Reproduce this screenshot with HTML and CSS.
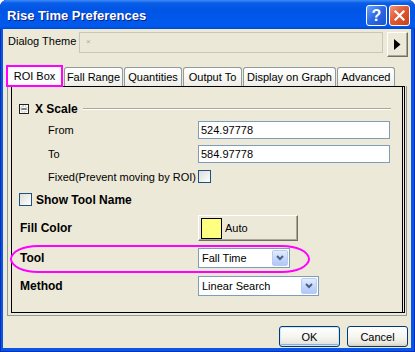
FILE: index.html
```html
<!DOCTYPE html>
<html>
<head>
<meta charset="utf-8">
<link rel="stylesheet" href="styles.css">
</head>
<body>
<div class="window">
  <div class="titlebar">
    <span class="title">Rise Time Preferences</span>
    <span class="tb-btn help">?</span>
    <span class="tb-btn close"><svg width="11" height="11" viewBox="0 0 11 11"><path d="M1.5 1.5 L9.5 9.5 M9.5 1.5 L1.5 9.5" stroke="#fff" stroke-width="2.2" stroke-linecap="square"/></svg></span>
  </div>
  <div class="client">
    <div class="theme-row">
      <span class="theme-label">Dialog Theme</span>
      <div class="theme-input"><span class="theme-x">×</span></div>
      <div class="arrow-btn"><svg width="7" height="11" viewBox="0 0 7 11"><path d="M0 0 L6.5 5.5 L0 11 Z" fill="#000"/></svg></div>
    </div>
    <div class="tabs">
      <div class="tab active t-roi">ROI Box</div>
      <div class="tab t-fall">Fall Range</div>
      <div class="tab t-quant">Quantities</div>
      <div class="tab t-out">Output To</div>
      <div class="tab t-disp">Display on Graph</div>
      <div class="tab t-adv">Advanced</div>
    </div>
    <div class="panel">
      <div class="page">
        <div class="group-head">
          <svg class="collapse" width="10" height="10" viewBox="0 0 10 10"><rect x="0.5" y="0.5" width="9" height="9" fill="#fff" stroke="#222"/><rect x="2" y="2" width="6" height="6" rx="2" fill="none" stroke="#777" stroke-width="0.8" stroke-dasharray="1 1"/><path d="M2.5 5 H7.5" stroke="#000" stroke-width="1"/></svg>
          <span class="gh-title">X Scale</span>
          <span class="gh-line"></span>
        </div>
        <div class="row r-from"><span class="lbl">From</span><div class="textbox">524.97778</div></div>
        <div class="row r-to"><span class="lbl">To</span><div class="textbox">584.97778</div></div>
        <div class="row r-fixed"><span class="lbl">Fixed(Prevent moving by ROI)</span><div class="cb"></div></div>
        <div class="check-row"><div class="cb"></div><span class="bold">Show Tool Name</span></div>
        <div class="row r-fill"><span class="lbl bold top">Fill Color</span><div class="color-btn"><span class="swatch"></span><span class="auto">Auto</span></div></div>
        <div class="row r-tool"><span class="lbl bold top">Tool</span><div class="combo c-tool"><span class="combo-text">Fall Time</span><span class="dd"><svg width="8" height="6" viewBox="0 0 8 6"><path d="M1 1 L4 4 L7 1" fill="none" stroke="#4D6185" stroke-width="2"/></svg></span></div></div>
        <div class="row r-method"><span class="lbl bold top">Method</span><div class="combo c-method"><span class="combo-text">Linear Search</span><span class="dd"><svg width="8" height="6" viewBox="0 0 8 6"><path d="M1 1 L4 4 L7 1" fill="none" stroke="#4D6185" stroke-width="2"/></svg></span></div></div>
      </div>
    </div>
    <div class="footer">
      <div class="btn default">OK</div>
      <div class="btn">Cancel</div>
    </div>
  </div>
</div>
</body>
</html>
```
FILE: styles.css
```css
body {
  margin: 0;
  background: #fff;
  font-family: "Liberation Sans", Arial, sans-serif;
  font-size: 11px;
  color: #000;
}

.window {
  width: 415px;
  height: 352px;
  display: flex;
  flex-direction: column;
  background: #0A55E3;
  border-radius: 7px 7px 0 0;
  overflow: hidden;
  box-shadow: inset 1px 0 0 #0030B8, inset -1px 0 0 #0030B8, inset 0 -1px 0 #0030B8;
}

.titlebar {
  height: 29px;
  flex: none;
  display: flex;
  align-items: center;
  padding: 0 5px 0 7px;
  background: linear-gradient(#3D8CF5 0, #0A5DE8 3px, #0055E5 10px, #0058EA 20px, #005AEE 26px, #0048CC 29px);
  border-radius: 7px 7px 0 0;
}

.title {
  flex: 1;
  color: #fff;
  font-weight: bold;
  font-size: 13px;
  padding-top: 2px;
  text-shadow: 1px 1px 0 #0A1E80;
}

.tb-btn {
  width: 21px;
  height: 21px;
  box-sizing: border-box;
  border: 1px solid #fff;
  border-radius: 3px;
  margin: 2px 0 0 2px;
  display: flex;
  align-items: center;
  justify-content: center;
  color: #fff;
  font-weight: bold;
  font-size: 16px;
}

.help {
  background: linear-gradient(135deg, #6CA0FA, #2A68E2 50%, #1C55D0);
}

.close {
  background: linear-gradient(135deg, #F0957A, #E05A33 45%, #C8401A);
}

.client {
  flex: 1;
  margin: 0 4px 4px 3px;
  background: #ECE9D8;
  display: flex;
  flex-direction: column;
}

.theme-row {
  display: flex;
  align-items: flex-start;
  margin-top: 3px;
  padding-left: 5px;
  height: 25px;
}

.theme-label {
  width: 71px;
  padding-top: 1px;
  line-height: 16px;
}

.theme-input {
  width: 304px;
  height: 21px;
  box-sizing: border-box;
  border: 1px solid #C9C7BA;
  background: #EBE8D8;
  padding-left: 6px;
  line-height: 14px;
}

.theme-x {
  color: #A8A8A8;
  font-size: 8px;
}

.arrow-btn {
  margin-left: 4px;
  width: 21px;
  height: 25px;
  box-sizing: border-box;
  border: 1px solid;
  border-color: #fff #716F64 #716F64 #fff;
  box-shadow: inset -1px -1px 0 #ACA899;
  display: flex;
  align-items: center;
  justify-content: center;
}

.tabs {
  margin-top: 8px;
  height: 21px;
  display: flex;
  align-items: flex-end;
  padding-left: 3px;
  gap: 1px;
}

.tab {
  height: 19px;
  box-sizing: border-box;
  border: 1px solid #919B9C;
  border-bottom: none;
  border-radius: 3px 3px 0 0;
  background: linear-gradient(#FFFFFF, #F8F8F5 50%, #EDECE6);
  display: flex;
  align-items: center;
  justify-content: center;
  white-space: nowrap;
}

.tab.active {
  height: 22px;
  border: 2px solid #FF00FF;
  border-radius: 0;
  margin-bottom: -1px;
  position: relative;
  z-index: 1;
  background: #FCFCFE;
}

.t-roi { width: 57px; }
.t-fall { width: 59px; }
.t-quant { width: 58px; }
.t-out { width: 59px; }
.t-disp { width: 93px; }
.t-adv { width: 58px; }

.panel {
  margin-left: 4px;
  width: 400px;
  height: 230px;
  box-sizing: border-box;
  border: 1px solid #919B9C;
  border-top: none;
  padding: 0 1px 2px 3px;
  flex: none;
}

.page {
  height: 100%;
  box-sizing: border-box;
  border: 1px solid #000;
  border-right: 3px double #000;
}

.group-head {
  margin-top: 14px;
  height: 16px;
  display: flex;
  align-items: center;
  padding-left: 7px;
}

.gh-title {
  margin-left: 6px;
  font-weight: bold;
  font-size: 12px;
}

.gh-line {
  flex: 1;
  margin: 0 11px 0 5px;
  border-top: 1px solid #ACA899;
  border-bottom: 1px solid #fff;
}

.row {
  display: grid;
  grid-template-columns: 186px auto;
  align-items: center;
}

.lbl {
  padding-left: 36px;
}

.bold {
  font-weight: bold;
  font-size: 12px;
}

.lbl.top {
  padding-left: 8px;
}

.r-from { margin-top: 4px; height: 18px; }
.r-to { margin-top: 6px; height: 18px; }
.r-fixed { margin-top: 7px; height: 13px; }
.r-fill { margin-top: 9px; height: 26px; }
.r-tool { margin-top: 7px; height: 20px; position: relative; }
.r-method { margin-top: 8px; height: 20px; }

.r-tool::after {
  content: "";
  position: absolute;
  left: -2px;
  top: -3px;
  width: 300px;
  height: 28px;
  box-sizing: border-box;
  border: 2px solid #FF00FF;
  border-radius: 28px / 14px;
  pointer-events: none;
}

.textbox {
  width: 192px;
  height: 18px;
  box-sizing: border-box;
  border: 1px solid #7F9DB9;
  background: #fff;
  padding-left: 2px;
  line-height: 16px;
}

.cb {
  width: 13px;
  height: 13px;
  box-sizing: border-box;
  border: 1px solid #1C5180;
  background: linear-gradient(135deg, #DCDCD7, #fff);
}

.check-row {
  margin-top: 10px;
  height: 13px;
  display: flex;
  align-items: center;
  padding-left: 7px;
  gap: 4px;
}

.color-btn {
  width: 100px;
  height: 26px;
  box-sizing: border-box;
  border: 1px solid;
  border-color: #fff #716F64 #716F64 #fff;
  box-shadow: inset -1px -1px 0 #ACA899;
  display: flex;
  align-items: center;
  padding-left: 2px;
}

.swatch {
  width: 21px;
  height: 21px;
  box-sizing: border-box;
  border: 1px solid #000;
  background: #FFFF80;
}

.auto {
  margin-left: 3px;
}

.combo {
  height: 20px;
  box-sizing: border-box;
  border: 1px solid #7F9DB9;
  background: #fff;
  display: flex;
  align-items: center;
  padding: 1px;
}

.c-tool { width: 92px; }
.c-method { width: 121px; }

.combo-text {
  flex: 1;
  padding-left: 2px;
}

.dd {
  width: 16px;
  height: 16px;
  box-sizing: border-box;
  border: 1px solid #B8CBF3;
  border-radius: 2px;
  background: linear-gradient(#E3ECFE, #C2D4FB 60%, #B2C7F7);
  display: flex;
  align-items: center;
  justify-content: center;
}

.footer {
  margin-top: 10px;
  display: flex;
  justify-content: flex-end;
  gap: 7px;
  padding-right: 3px;
}

.btn {
  width: 61px;
  height: 21px;
  box-sizing: border-box;
  border: 1px solid #003C74;
  border-radius: 3px;
  background: linear-gradient(#FFFFFF, #F4F4F0 55%, #E8E6DD 85%, #D6D0C5);
  display: flex;
  align-items: center;
  justify-content: center;
}

.btn.default {
  box-shadow: inset 0 0 0 1px #CEE7FF, inset 0 -2px 0 0 #89ADE4;
}
```
